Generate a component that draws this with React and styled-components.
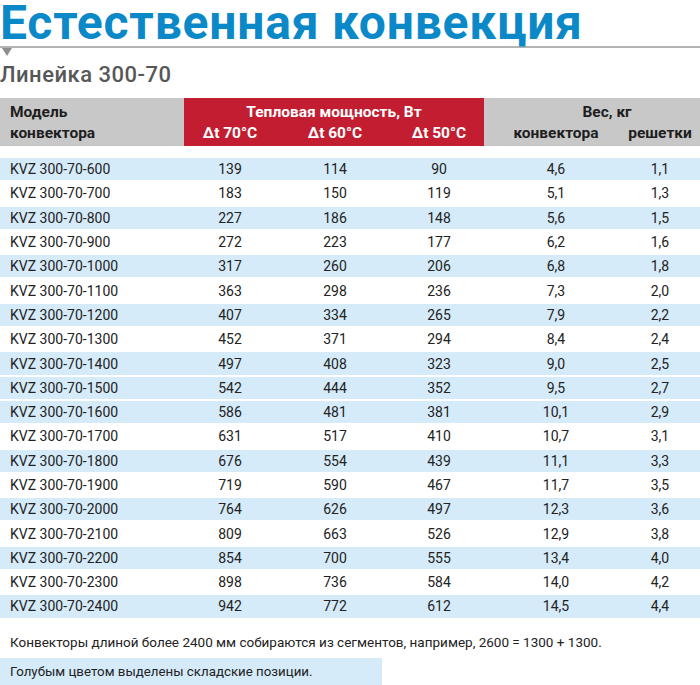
import React from 'react'
import styled, { createGlobalStyle } from 'styled-components'

const GlobalStyle = createGlobalStyle`
  body {
    margin: 0;
    background: #fff;
    font-family: Roboto, "Liberation Sans", sans-serif;
  }
`

const COLS = '184px 92px 118px 90px 144px 72px'

const Page = styled.div`
  width: 700px;
  overflow: hidden;
`

const Title = styled.h1`
  margin: 0;
  font-size: 48px;
  line-height: 46px;
  font-weight: 700;
  letter-spacing: 0.8px;
  color: #0b88c7;
  white-space: nowrap;
`

const Divider = styled.div`
  border-top: 2px solid #b3b3b3;
  &::after {
    content: '';
    display: block;
    width: 0;
    height: 0;
    margin-left: 2px;
    border-left: 5px solid transparent;
    border-right: 5px solid transparent;
    border-top: 8px solid #8f8f8f;
  }
`

const Subtitle = styled.h2`
  margin: 6px 0 0;
  font-size: 22px;
  line-height: 26px;
  font-weight: 500;
  letter-spacing: 0.5px;
  color: #575757;
`

const Header = styled.div`
  margin-top: 10px;
  display: grid;
  grid-template-columns: ${COLS};
  background: #c8c8c8;
  color: #1e1e1e;
  font-size: 15.5px;
  font-weight: 700;
  line-height: 21px;
`

const Group = styled.div`
  grid-column: ${p => p.$span};
  display: grid;
  grid-template-columns: ${p => p.$cols};
  background: ${p => (p.$red ? '#c21d31' : 'transparent')};
  color: ${p => (p.$red ? '#fff' : '#1e1e1e')};
  padding: 4px 0 2px;
`

const HeadCell = styled.div`
  grid-column: ${p => p.$span || 'auto'};
  text-align: ${p => p.$align || 'center'};
  padding: 0 ${p => p.$pr || 0}px 0 ${p => p.$pl || 0}px;
  white-space: nowrap;
`

const Body = styled.div`
  margin-top: 11px;
`

const Row = styled.div`
  display: grid;
  grid-template-columns: ${COLS};
  height: 24.3px;
  box-sizing: border-box;
  border-top: 1px solid #fff;
  border-bottom: 1px solid #fff;
  background: ${p => (p.$stock ? '#d6ebf9' : '#fff')};
  align-items: center;
  font-size: 14px;
  color: #222;
`

const Cell = styled.div`
  text-align: ${p => (p.$left ? 'left' : 'center')};
  padding: 0 ${p => p.$pr || 0}px 0 ${p => (p.$left ? 10 : 0)}px;
  white-space: nowrap;
`

const Note = styled.p`
  margin: 14px 0 0;
  padding-left: 10px;
  font-size: 13.5px;
  line-height: 18px;
  color: #222;
`

const Legend = styled.div`
  margin-top: 7px;
  width: 382px;
  height: 28px;
  box-sizing: border-box;
  padding-left: 10px;
  display: flex;
  align-items: center;
  background: #d6ebf9;
  font-size: 13.3px;
  color: #222;
`

const rows = [
  ['600', 139, 114, 90, '4,6', '1,1', true],
  ['700', 183, 150, 119, '5,1', '1,3', false],
  ['800', 227, 186, 148, '5,6', '1,5', true],
  ['900', 272, 223, 177, '6,2', '1,6', false],
  ['1000', 317, 260, 206, '6,8', '1,8', true],
  ['1100', 363, 298, 236, '7,3', '2,0', false],
  ['1200', 407, 334, 265, '7,9', '2,2', true],
  ['1300', 452, 371, 294, '8,4', '2,4', false],
  ['1400', 497, 408, 323, '9,0', '2,5', true],
  ['1500', 542, 444, 352, '9,5', '2,7', true],
  ['1600', 586, 481, 381, '10,1', '2,9', true],
  ['1700', 631, 517, 410, '10,7', '3,1', false],
  ['1800', 676, 554, 439, '11,1', '3,3', true],
  ['1900', 719, 590, 467, '11,7', '3,5', false],
  ['2000', 764, 626, 497, '12,3', '3,6', true],
  ['2100', 809, 663, 526, '12,9', '3,8', false],
  ['2200', 854, 700, 555, '13,4', '4,0', true],
  ['2300', 898, 736, 584, '14,0', '4,2', false],
  ['2400', 942, 772, 612, '14,5', '4,4', true],
]

const App = () => {
  return (
    <Page>
      <GlobalStyle />
      <Title>Естественная конвекция</Title>
      <Divider />
      <Subtitle>Линейка 300-70</Subtitle>

      <Header>
        <Group $span="1" $cols="1fr">
          <HeadCell $align="left" $pl={10}>Модель</HeadCell>
          <HeadCell $align="left" $pl={10}>конвектора</HeadCell>
        </Group>
        <Group $span="2 / span 3" $cols="92px 118px 90px" $red>
          <HeadCell $span="1 / -1">Тепловая мощность, Вт</HeadCell>
          <HeadCell>Δt 70°C</HeadCell>
          <HeadCell>Δt 60°C</HeadCell>
          <HeadCell>Δt 50°C</HeadCell>
        </Group>
        <Group $span="5 / span 2" $cols="144px 72px">
          <HeadCell $span="1 / -1" $pl={30}>Вес, кг</HeadCell>
          <HeadCell>конвектора</HeadCell>
          <HeadCell $pr={8}>решетки</HeadCell>
        </Group>
      </Header>

      <Body>
        {rows.map(([len, p70, p60, p50, wConv, wGrid, stock]) => (
          <Row key={len} $stock={stock}>
            <Cell $left>KVZ 300-70-{len}</Cell>
            <Cell>{p70}</Cell>
            <Cell>{p60}</Cell>
            <Cell>{p50}</Cell>
            <Cell>{wConv}</Cell>
            <Cell $pr={8}>{wGrid}</Cell>
          </Row>
        ))}
      </Body>

      <Note>Конвекторы длиной более 2400 мм собираются из сегментов, например, 2600 = 1300 + 1300.</Note>
      <Legend>Голубым цветом выделены складские позиции.</Legend>
    </Page>
  )
}

export default App
